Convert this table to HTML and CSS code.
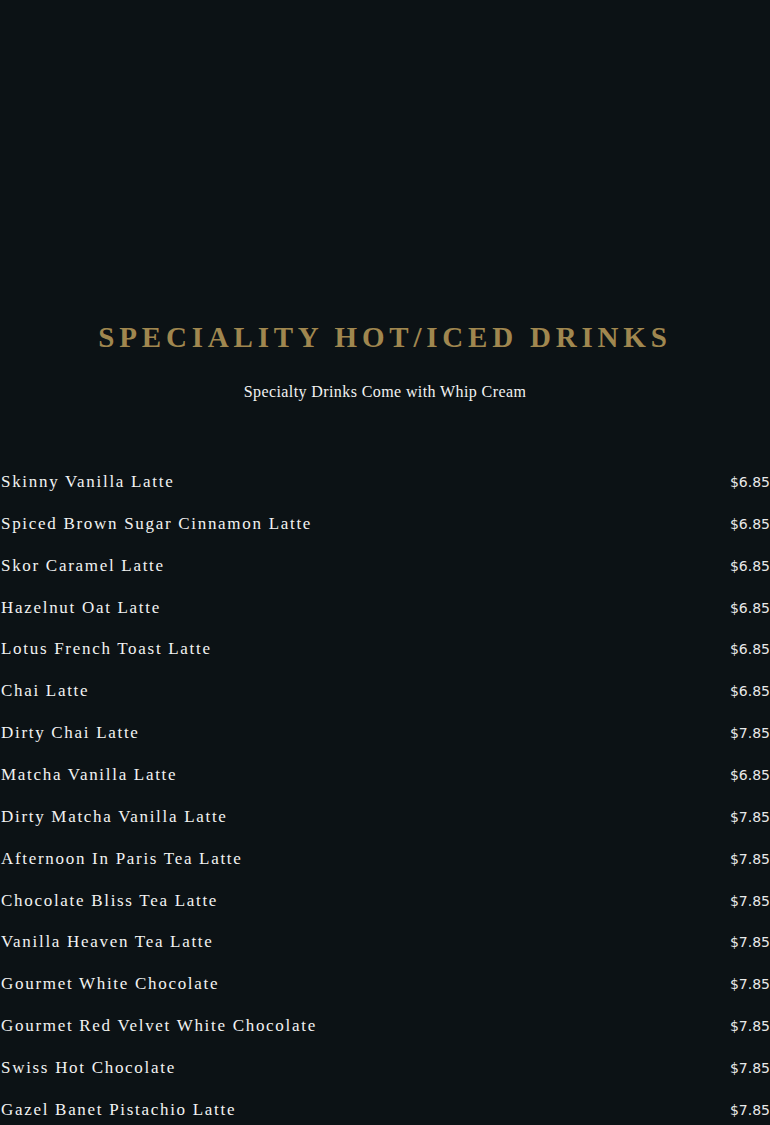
FILE: index.html
```html
<!DOCTYPE html>
<html>
<head>
<meta charset="utf-8">
<link rel="stylesheet" href="styles.css">
</head>
<body>
<div class="page">
  <div class="hero"></div>
  <h1 class="title">SPECIALITY HOT/ICED DRINKS</h1>
  <p class="subtitle">Specialty Drinks Come with Whip Cream</p>
  <ul class="menu">
    <li class="item"><span class="name">Skinny Vanilla Latte</span><span class="price">$6.85</span></li>
    <li class="item"><span class="name">Spiced Brown Sugar Cinnamon Latte</span><span class="price">$6.85</span></li>
    <li class="item"><span class="name">Skor Caramel Latte</span><span class="price">$6.85</span></li>
    <li class="item"><span class="name">Hazelnut Oat Latte</span><span class="price">$6.85</span></li>
    <li class="item"><span class="name">Lotus French Toast Latte</span><span class="price">$6.85</span></li>
    <li class="item"><span class="name">Chai Latte</span><span class="price">$6.85</span></li>
    <li class="item"><span class="name">Dirty Chai Latte</span><span class="price">$7.85</span></li>
    <li class="item"><span class="name">Matcha Vanilla Latte</span><span class="price">$6.85</span></li>
    <li class="item"><span class="name">Dirty Matcha Vanilla Latte</span><span class="price">$7.85</span></li>
    <li class="item"><span class="name">Afternoon In Paris Tea Latte</span><span class="price">$7.85</span></li>
    <li class="item"><span class="name">Chocolate Bliss Tea Latte</span><span class="price">$7.85</span></li>
    <li class="item"><span class="name">Vanilla Heaven Tea Latte</span><span class="price">$7.85</span></li>
    <li class="item"><span class="name">Gourmet White Chocolate</span><span class="price">$7.85</span></li>
    <li class="item"><span class="name">Gourmet Red Velvet White Chocolate</span><span class="price">$7.85</span></li>
    <li class="item"><span class="name">Swiss Hot Chocolate</span><span class="price">$7.85</span></li>
    <li class="item"><span class="name">Gazel Banet Pistachio Latte</span><span class="price">$7.85</span></li>
  </ul>
</div>
</body>
</html>
```
FILE: styles.css
```css
html, body {
  margin: 0;
  padding: 0;
  background: #0c1215;
}
.page {
  width: 770px;
  min-height: 1125px;
  color: #ffffff;
}
.hero {
  height: 318px;
}
.title {
  margin: 0;
  text-align: center;
  font-family: "Liberation Serif", serif;
  font-weight: bold;
  font-size: 29px;
  line-height: 38px;
  letter-spacing: 4.8px;
  color: #a0874f;
}
.subtitle {
  margin: 26px 0 0;
  text-align: center;
  font-family: "Liberation Serif", serif;
  font-size: 16px;
  line-height: 20px;
  letter-spacing: 0.4px;
  color: #f2f2f2;
}
.menu {
  list-style: none;
  margin: 70px 0 0;
  padding: 0;
}
.item {
  display: flex;
  justify-content: space-between;
  align-items: baseline;
  height: 41.87px;
}
.name {
  font-family: "Liberation Serif", serif;
  font-size: 17px;
  letter-spacing: 1.7px;
  padding-left: 1px;
  color: #f2f2f2;
}
.price {
  font-family: "DejaVu Sans", sans-serif;
  font-size: 14px;
  color: #e8e8e8;
}
```
